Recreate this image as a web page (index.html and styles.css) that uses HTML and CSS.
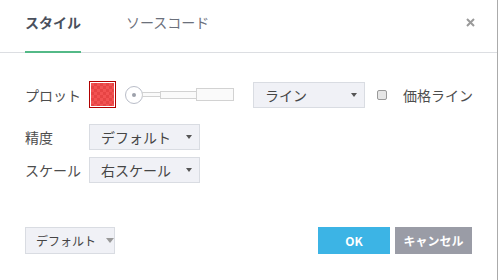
FILE: index.html
```html
<!DOCTYPE html>
<html lang="ja">
<head>
  <meta charset="UTF-8">
  <title>スタイル</title>
  <link rel="stylesheet" href="styles.css">
</head>
<body>
  <div class="dialog">
    <!-- ONGLETS -->
    <div class="dialog-header">
      <div class="tab active">スタイル</div>
      <div class="tab">ソースコード</div>
      <span class="close">
        <svg width="9" height="9" viewBox="0 0 9 9"><path d="M1 1L8 8M8 1L1 8" stroke="#9a9a9a" stroke-width="2"/></svg>
      </span>
    </div>

    <!-- CONTENU -->
    <div class="dialog-body">
      <div class="row row-plot">
        <span class="label">プロット</span>
        <span class="swatch"><span class="swatch-fill"></span></span>
        <div class="slider">
          <span class="knob"></span>
          <span class="seg seg-1"></span>
          <span class="seg seg-2"></span>
          <span class="seg seg-3"></span>
        </div>
        <div class="select select-line">ライン<span class="caret"></span></div>
        <label class="check"><span class="checkbox"></span>価格ライン</label>
      </div>
      <div class="row row-precision">
        <span class="label">精度</span>
        <div class="select">デフォルト<span class="caret"></span></div>
      </div>
      <div class="row row-scale">
        <span class="label">スケール</span>
        <div class="select">右スケール<span class="caret"></span></div>
      </div>
    </div>

    <!-- BOUTONS -->
    <div class="dialog-footer">
      <div class="btn btn-default">デフォルト<span class="caret caret-light"></span></div>
      <div class="actions">
        <div class="btn btn-ok">OK</div>
        <div class="btn btn-cancel">キャンセル</div>
      </div>
    </div>
  </div>
</body>
</html>
```

FILE: styles.css
```css
:root {
  --text-color: #4d4d4d;
  --tab-color: #4a505c;
  --green: #53b987;
  --border: #d9dce2;
  --field-bg: #f0f1f6;
  --font-family: "Noto Sans CJK JP", "Noto Sans", sans-serif;
}

* {
  box-sizing: border-box;
  margin: 0;
  padding: 0;
}

body {
  font-family: var(--font-family);
  color: var(--text-color);
  background: #fff;
}

.dialog {
  width: 498px;
  height: 280px;
  border-right: 1px solid #ababab;
  display: flex;
  flex-direction: column;
}

/* ONGLETS */
.dialog-header {
  height: 53px;
  border-bottom: 1px solid #dcdee2;
  display: flex;
  align-items: stretch;
  padding-left: 25px;
}

.tab {
  font-size: 14px;
  color: #6b707b;
  display: flex;
  align-items: center;
  padding-bottom: 7px;
  margin-right: 45px;
  border-bottom: 2px solid transparent;
  margin-bottom: -1px;
}

.tab.active {
  color: var(--tab-color);
  font-weight: bold;
  border-bottom-color: var(--green);
}

.close {
  margin-left: auto;
  margin-right: 22px;
  margin-top: 18px;
  height: 9px;
  display: flex;
}

/* CONTENU */
.dialog-body {
  padding: 28px 0 0 25px;
}

.row {
  display: flex;
  align-items: center;
  font-size: 14px;
}

.row-precision {
  margin-top: 16px;
}

.row-scale {
  margin-top: 7px;
}

.label {
  width: 64px;
}

.swatch {
  width: 27px;
  height: 27px;
  border: 1px solid #b00000;
  padding: 1px;
  background: #fff;
}

.swatch-fill {
  display: block;
  width: 100%;
  height: 100%;
  background-color: #f25252;
  background-image:
    linear-gradient(45deg, #e64444 25%, transparent 25%, transparent 75%, #e64444 75%),
    linear-gradient(45deg, #e64444 25%, transparent 25%, transparent 75%, #e64444 75%);
  background-size: 6px 6px;
  background-position: 0 0, 3px 3px;
}

.slider {
  display: flex;
  align-items: center;
  margin-left: 9px;
}

.knob {
  width: 18px;
  height: 18px;
  border: 1px solid #b9bdc8;
  border-radius: 50%;
  background: #fff;
  display: flex;
  align-items: center;
  justify-content: center;
}

.knob::after {
  content: "";
  width: 4px;
  height: 4px;
  border-radius: 50%;
  background: #9da1ab;
}

.seg {
  border: 1px solid #d2d2d2;
  background: #fafafa;
  margin-left: -1px;
}

.seg-1 { width: 19px; height: 5px; }
.seg-2 { width: 37px; height: 8px; }
.seg-3 { width: 38px; height: 13px; }

.select {
  width: 111px;
  height: 26px;
  border: 1px solid var(--border);
  background: var(--field-bg);
  display: flex;
  align-items: center;
  padding-left: 11px;
  font-size: 14px;
  color: #454545;
}

.select-line {
  width: 112px;
  margin-left: 19px;
}

.caret {
  margin-left: auto;
  margin-right: 7px;
  border-left: 3px solid transparent;
  border-right: 3px solid transparent;
  border-top: 4px solid #555;
}

.check {
  display: flex;
  align-items: center;
  margin-left: 12px;
}

.checkbox {
  width: 10px;
  height: 10px;
  border: 1px solid #9a9a9a;
  border-radius: 2px;
  background: #e6e6e6;
  margin-right: 16px;
}

/* BOUTONS */
.dialog-footer {
  margin-top: 44px;
  display: flex;
  padding: 0 25px;
}

.btn {
  height: 27px;
  display: flex;
  align-items: center;
  justify-content: center;
  font-size: 12px;
}

.btn-default {
  width: 90px;
  border: 1px solid var(--border);
  background: var(--field-bg);
  justify-content: flex-start;
  padding-left: 10px;
  color: #444;
}

.caret-light {
  margin-left: 10px;
  margin-right: 0;
  border-left-width: 4px;
  border-right-width: 4px;
  border-top: 5px solid #999;
}

.actions {
  margin-left: auto;
  display: flex;
  gap: 5px;
}

.btn-ok {
  width: 72px;
  background: #3cb4e5;
  color: #fff;
  font-weight: bold;
}

.btn-cancel {
  width: 77px;
  background: #9a9ca6;
  color: #fff;
  font-weight: bold;
}
```
